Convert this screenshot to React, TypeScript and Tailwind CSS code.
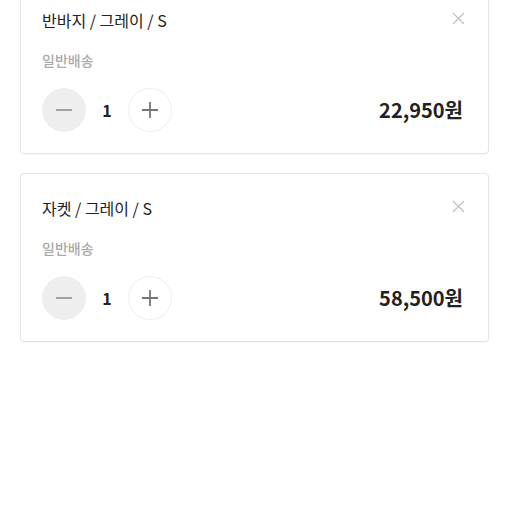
import { useState } from 'react';

type CartItem = {
  id: number;
  name: string;
  shipping: string;
  price: number;
};

const initialItems: CartItem[] = [
  { id: 1, name: '반바지 / 그레이 / S', shipping: '일반배송', price: 22950 },
  { id: 2, name: '자켓 / 그레이 / S', shipping: '일반배송', price: 58500 },
];

function ItemCard({ item }: { item: CartItem }) {
  const [qty, setQty] = useState(1);

  return (
    <div className="rounded-[4px] border border-[#e4e4e4] bg-white pl-[21px] pr-[25px] pt-[23px] pb-[21px] shadow-[0_1px_2px_rgba(0,0,0,0.04)]">
      {/* Title row */}
      <div className="flex items-center justify-between">
        <p className="text-[16px] leading-[22px] text-[#222]">{item.name}</p>
        <button className="-mr-[3px] -mt-[4px] flex h-[16px] w-[16px] items-center justify-center text-[#c4c4c4]">
          <svg width="13" height="13" viewBox="0 0 13 13" fill="none" stroke="currentColor" strokeWidth="1.4">
            <path d="M1 1l11 11M12 1L1 12" />
          </svg>
        </button>
      </div>

      <p className="mt-[19px] text-[14px] font-medium leading-[20px] text-[#aaa]">{item.shipping}</p>

      {/* Quantity + price */}
      <div className="mt-[18px] flex items-center justify-between">
        <div className="flex items-center">
          <button
            onClick={() => setQty((q) => Math.max(1, q - 1))}
            className="flex h-[44px] w-[44px] items-center justify-center rounded-full bg-[#eeeeee] text-[#999]"
          >
            <svg width="20" height="20" viewBox="0 0 20 20" fill="none" stroke="currentColor" strokeWidth="1.8">
              <path d="M2 10h16" />
            </svg>
          </button>
          <span className="w-[42px] text-center text-[16px] font-bold text-[#222]">{qty}</span>
          <button
            onClick={() => setQty((q) => q + 1)}
            className="flex h-[44px] w-[44px] items-center justify-center rounded-full border border-[#efefef] bg-white text-[#777]"
          >
            <svg width="20" height="20" viewBox="0 0 20 20" fill="none" stroke="currentColor" strokeWidth="1.8">
              <path d="M2 10h16M10 2v16" />
            </svg>
          </button>
        </div>
        <p className="text-[20px] font-bold text-[#222]">
          {(item.price * qty).toLocaleString('ko-KR')}원
        </p>
      </div>
    </div>
  );
}

export default function App() {
  return (
    <div
      className="min-h-screen bg-white px-[20px]"
      style={{ fontFamily: '"Noto Sans CJK KR", "Noto Sans", sans-serif' }}
    >
      <div className="-mt-[15px] flex flex-col gap-[19px]">
        {initialItems.map((item) => (
          <ItemCard key={item.id} item={item} />
        ))}
      </div>
    </div>
  );
}
